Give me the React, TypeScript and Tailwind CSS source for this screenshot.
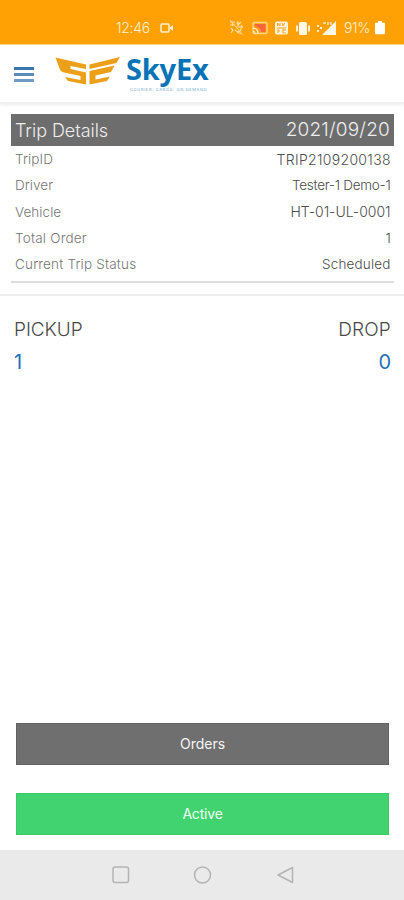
import React from "react";

const font = "font-['Inter','Liberation_Sans',sans-serif]";

function StatusIcons() {
  return (
    <svg width="109" height="20" viewBox="0 0 109 20" className="shrink-0" fill="none">
      <g stroke="#ffe0a3" strokeWidth="1.1">
        <path d="M1 4h5M1 7h5M3.500 4v4M8 4l1 3 3-3M9 3v5M2 10l2 2-2 3M7 9h5v3l-4 3M6 12l6 4M12 7l2 3" />
        <path d="M1 2l13 15" strokeWidth=".8" />
      </g>
      <rect x="24" y="4.500" width="14" height="11" rx="1" stroke="#ffd78c" strokeWidth="1.300" />
      <path d="M26 6h10.500v8H32c0-3-2.500-5-6-6Z" fill="#fa653f" />
      <path d="M24 10c3 .3 5 2 5 6M24 13c2 .5 2 1 2 3" stroke="#fff0d0" strokeWidth="1.200" />
      <rect x="46" y="3.500" width="13" height="13" rx="2" fill="#fff3d9" />
      <path d="M48.500 8V5l2.500 3V5M53 5l1.200 3L55.500 5M48 10h9M49 11v4M49 13h2M54 11v4h3M54 12h3" stroke="#f5a427" strokeWidth="1" />
      <rect x="70" y="4" width="8" height="13" rx="1.500" fill="#fff8e7" />
      <path d="M68 7.500v6M80 7.500v6" stroke="#fff8e7" strokeWidth="1.800" />
      <path d="M89 7v2M89 12v2M91 10h2" stroke="#fff4dc" strokeWidth="1.800" />
      <path d="M107 3v14H93Z" fill="#fff8e8" />
      <path d="M94 5h3M99 4v3M102 4v3" stroke="#ffe7b9" strokeWidth="1.500" />
    </svg>
  );
}

function StatusBar() {
  return (
    <div className="flex h-[45px] shrink-0 items-center border-b border-[#ffcf70] bg-[#ffa005] pt-[11px] text-[#fff0d2]">
      <span className="ml-[116px] w-[34px] whitespace-nowrap text-[14px] font-light leading-none tracking-[-0.300px]">12:46</span>
      <svg width="14" height="12" viewBox="0 0 14 12" className="ml-[10px]" fill="none">
        <rect x="1" y="2" width="8" height="8" rx="1" stroke="#fff0d2" strokeWidth="1.500" />
        <path d="m9 6 4-3v6Z" fill="#fff0d2" />
      </svg>
      <div className="ml-[55px] flex"><StatusIcons /></div>
      <span className="ml-[6px] w-[27px] whitespace-nowrap text-[14px] font-light leading-none tracking-[-0.400px]">91%</span>
      <svg width="10" height="14" viewBox="0 0 10 16" preserveAspectRatio="none" className="ml-[4px]">
        <path d="M3 0h4v2h2q1 0 1 1v11q0 1-1 1H1q-1 0-1-1V3q0-1 1-1h2Z" fill="#fffdf7" />
      </svg>
    </div>
  );
}

function Wings() {
  return (
    <svg width="66" height="30" viewBox="0 0 66 30" className="shrink-0" fill="#eca019">
      <path d="M.5 1.500 31 8.500v4.500L15.500 10v3L31 16.500v12L13 25l-3-4 15.500 3v-4L9 16.500Q6 16 4.500 12.500Z" />
      <path d="M65 1 34.500 8.500v4.500L61.500 7ZM59.500 9.500 34.500 15v13.500L52 25l3-4.500-14.500 3v-4L56 16Z" />
    </svg>
  );
}

function Header() {
  return (
    <header className="flex h-[59px] shrink-0 border-b-2 border-[#f1f1f1] bg-white shadow-[0_1px_3px_#eeeeee]">
      <div className="ml-[14px] mt-[22px] flex h-[15px] w-[20px] flex-col justify-between">
        <i className="h-[3px] bg-[#3878ae]" />
        <i className="h-[3px] bg-[#5b8dbb]" />
        <i className="h-[3px] bg-[#7199c3]" />
      </div>
      <div className="ml-[21px] mt-[11px]"><Wings /></div>
      <div className="ml-[5px] mt-[7px] w-[86px]">
        <div className="whitespace-nowrap font-['Noto_Sans','Open_Sans',sans-serif] text-[29px] font-bold leading-[34px] tracking-[-0.200px] text-[#0873b6]">SkyEx</div>
        <div className="mt-[1px] ml-[4px] whitespace-nowrap text-[4px] leading-[6px] tracking-[0.650px] text-[#69a9cd]">COURIER. CARGO. ON DEMAND</div>
      </div>
    </header>
  );
}

const details = [
  { label: "TripID", value: "TRIP2109200138", l: "tracking-[0.100px]", v: "text-[14px] tracking-[0.310px] -mr-[0.300px]" },
  { label: "Driver", value: "Tester-1 Demo-1", l: "tracking-[0.050px]", v: "tracking-[-0.250px]" },
  { label: "Vehicle", value: "HT-01-UL-0001", l: "tracking-[0.050px]", v: "text-[14px] tracking-[-0.030px]" },
  { label: "Total Order", value: "1", l: "tracking-[0.200px]", v: "tracking-[-0.300px]" },
  { label: "Current Trip Status", value: "Scheduled", l: "tracking-[0.180px]", v: "tracking-[0.150px]" },
];

export default function App() {
  return (
    <div className={`flex h-[900px] w-[404px] flex-col overflow-hidden bg-white ${font}`}>
      <StatusBar />
      <Header />
      <section className="ml-[11px] mr-[10px] mt-[10px] h-[169px] shrink-0 border-b-2 border-[#dedede]">
        <div className="flex h-[32px] items-center justify-between bg-[#6d6d6d] pl-[4px] pr-[4px] text-[18px] font-light text-[#eeeeee]">
          <span className="tracking-[-0.050px]">Trip Details</span>
          <span className="text-[19px] tracking-[0.200px]">2021/09/20</span>
        </div>
        {details.map((d) => (
          <div key={d.label} className="flex h-[26.300px] items-center justify-between pl-[4px] pr-[3.500px] text-[13.500px] font-light">
            <span className={`text-[#777777] ${d.l}`}>{d.label}</span>
            <span className={`text-[#4d4d4d] ${d.v}`}>{d.value}</span>
          </div>
        ))}
      </section>
      <div className="mt-[11px] h-[2px] shrink-0 bg-[#ededed]" />
      <section className="flex justify-between pl-[14px] pr-[13px] pt-[20px] text-[19px] font-light leading-[28px] text-[#484848]">
        <div>
          <div className="tracking-[-0.050px]">PICKUP</div>
          <div className="mt-[4px] text-[20px] font-normal text-[#2471b5]">1</div>
        </div>
        <div className="text-right">
          <div className="tracking-[0.200px]">DROP</div>
          <div className="mt-[4px] text-[20px] font-normal text-[#2471b5]">0</div>
        </div>
      </section>
      <div className="mt-auto flex shrink-0 flex-col gap-[28px] pl-[16px] pr-[15px] pb-[15px]">
        <button className="h-[42px] border border-[#626262] bg-[#6f6f6f] pb-px text-[14px] tracking-[0px] text-[#f5f5f5]">Orders</button>
        <button className="h-[42px] border border-[#39c965] bg-[#41d36f] pb-px text-[14px] tracking-[-0.200px] text-[#f2fff5]">Active</button>
      </div>
      <nav className="flex h-[50px] shrink-0 items-center bg-[#eaeaea] pl-[112px]">
        <svg width="182" height="18" viewBox="0 0 182 18" fill="none" stroke="#b4b4b4" strokeWidth="1.500">
          <rect x="1" y="1" width="15.500" height="15.500" rx="2" />
          <circle cx="90.500" cy="9" r="8" />
          <path d="M166 9 180.500 1.500v15Z" strokeLinejoin="round" />
        </svg>
      </nav>
    </div>
  );
}
